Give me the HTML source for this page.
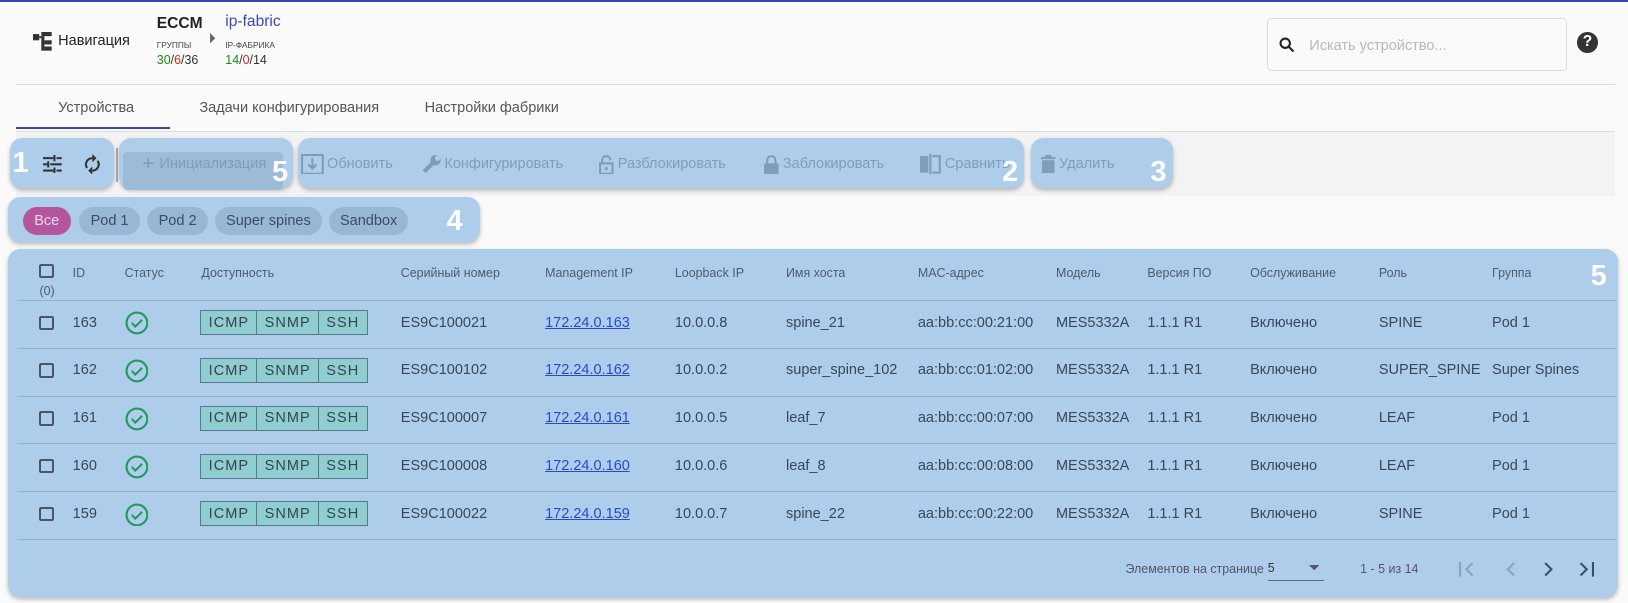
<!DOCTYPE html><html><head><meta charset="utf-8"><style>
*{margin:0;padding:0;box-sizing:border-box}
html,body{width:1628px;height:603px;overflow:hidden}
body{background:#fafafa;font-family:"Liberation Sans",sans-serif;color:#333}
#w{position:relative;width:1568px;height:581px;zoom:1.0383}
.a{position:absolute;white-space:nowrap}
.box{position:absolute;background:#aecdeb;border-radius:12px;box-shadow:0 2px 4px rgba(0,0,0,.25)}
.num{position:absolute;color:#fff;font-weight:bold;font-size:28px}
.btn{position:absolute;font-size:14px;color:#7f9dbb;display:flex;align-items:center;gap:3px}
.chip{position:absolute;top:199px;height:27px;border-radius:14px;background:#98b7d4;color:#3d4d62;font-size:14px;line-height:27px;text-align:center}
.th{position:absolute;top:256px;font-size:12px;color:#4d5c6f}
.row{position:absolute;left:16px;width:1540px;height:1px;background:#8fb2d6}
.c{position:absolute;font-size:14px;color:#38485a}
.cb{position:absolute;width:14px;height:14px;border:2px solid #4a5566;border-radius:2px}
.acc{position:absolute;display:flex;border:1px solid #5a7a8a;background:#8fcdd0;height:24px;font-size:14px;color:#35454f;letter-spacing:1px}
.acc span{padding:0 7px;display:flex;align-items:center;border-right:1px solid #5a7a8a}
.acc span:last-child{border:0}
a{color:#2a4bc8;text-decoration:underline}
</style></head><body><div id="w">
<div class="a" style="left:0;top:0;width:1568px;height:2px;background:#3949ab"></div>
<svg class="a" style="left:32px;top:31px" width="20" height="18" viewBox="0 0 20 18"><rect x="0" y="2" width="6" height="6" fill="#333"/><rect x="8" y="0" width="10" height="4" fill="#333"/><rect x="8" y="4" width="3" height="14" fill="#333"/><rect x="11" y="8" width="7" height="4" fill="#333"/><rect x="11" y="14" width="7" height="4" fill="#333"/><rect x="6" y="4" width="2" height="2" fill="#333"/></svg>
<div class="a" style="left:56px;top:32px;font-size:14px;color:#222">Навигация</div>
<div class="a" style="left:151px;top:14px;font-size:15px;font-weight:bold;color:#222">ECCM</div>
<div class="a" style="left:151px;top:39px;font-size:8px;color:#444">ГРУППЫ</div>
<div class="a" style="left:151px;top:51px;font-size:12px"><span style="color:#1a8a1a">30</span>/<span style="color:#e02020">6</span>/<span>36</span></div>
<svg class="a" style="left:201px;top:32px" width="8" height="10"><path d="M1 0L6 5L1 10Z" fill="#666"/></svg>
<div class="a" style="left:217px;top:13px;font-size:15px;color:#3a4aba">ip-fabric</div>
<div class="a" style="left:217px;top:39px;font-size:8px;color:#444">IP-ФАБРИКА</div>
<div class="a" style="left:217px;top:51px;font-size:12px"><span style="color:#1a8a1a">14</span>/<span style="color:#e02020">0</span>/<span>14</span></div>
<div class="a" style="left:1220px;top:17px;width:289px;height:51px;border:1px solid #ddd;border-radius:4px"></div>
<svg class="a" style="left:1232px;top:36px" width="16" height="16" viewBox="0 0 16 16"><circle cx="6" cy="6" r="4.5" fill="none" stroke="#222" stroke-width="2"/><path d="M9.5 9.5L14 14" stroke="#222" stroke-width="2"/></svg>
<div class="a" style="left:1261px;top:37px;font-size:14px;color:#b8b8b8">Искать устройство...</div>
<div class="a" style="left:1519px;top:31px;width:20px;height:20px;border-radius:50%;background:#333;color:#fff;font-size:15px;font-weight:bold;text-align:center;line-height:20px">?</div>
<div class="a" style="left:15px;top:81px;width:1540px;height:1px;background:#ddd"></div>
<div class="a" style="left:56px;top:96px;font-size:14px;color:#555">Устройства</div>
<div class="a" style="left:192px;top:96px;font-size:14px;color:#555">Задачи конфигурирования</div>
<div class="a" style="left:409px;top:96px;font-size:14px;color:#555">Настройки фабрики</div>
<div class="a" style="left:15px;top:122px;width:149px;height:2px;background:#3949ab"></div>
<div class="a" style="left:15px;top:126px;width:1540px;height:1px;background:#ddd"></div>
<div class="a" style="left:15px;top:127px;width:1540px;height:62px;background:#f3f3f3"></div>

<div class="box" style="left:10px;top:133px;width:100px;height:48px"></div>
<div class="num" style="left:12px;top:142px">1</div>
<svg class="a" style="left:40px;top:149px" width="20" height="18" viewBox="0 0 20 18"><path d="M1 3h10M14 3h5M1 9h4M8 9h11M1 15h10M14 15h5" stroke="#333" stroke-width="2"/><path d="M12 0v6M6 6v6M12 12v6" stroke="#333" stroke-width="2"/></svg>
<svg class="a" style="left:80px;top:148px" width="18" height="20" viewBox="0 0 18 20"><path d="M9 4a6 6 0 0 0-5 9.5M9 16a6 6 0 0 0 5-9.5" fill="none" stroke="#333" stroke-width="2"/><path d="M9 0v8l4-4zM9 20v-8l-4 4z" fill="#333"/></svg>
<div class="a" style="left:112px;top:143px;width:2px;height:32px;background:#aaa"></div>
<div class="box" style="left:115px;top:133px;width:167px;height:48px"></div>
<div class="a" style="left:118px;top:146px;width:155px;height:37px;background:#9bbbd9;border-radius:4px"></div>
<div class="btn" style="left:137px;top:148px;height:20px;font-size:14px"><span style="font-size:20px;margin-right:2px">+</span>Инициализация</div>
<div class="num" style="left:262px;top:150px">5</div>
<div class="box" style="left:287px;top:133px;width:699px;height:48px"></div>
<div class="btn" style="left:290px;top:148px;height:20px"><svg width="22" height="20"><rect x="1" y="1" width="20" height="18" fill="none" stroke="#7f9dbb" stroke-width="2"/><path d="M11 4v10M7 10l4 4 4-4" stroke="#7f9dbb" stroke-width="2" fill="none"/></svg>Обновить</div>
<div class="btn" style="left:405px;top:148px;height:20px"><svg width="20" height="20"><path d="M3 17L11 9" stroke="#7f9dbb" stroke-width="4"/><circle cx="14" cy="6" r="5" fill="#7f9dbb"/><circle cx="16" cy="4" r="2.5" fill="#aecdeb"/></svg>Конфигурировать</div>
<div class="btn" style="left:576px;top:148px;height:20px"><svg width="16" height="20"><path d="M4 9V6a4 4 0 0 1 8 0" fill="none" stroke="#7f9dbb" stroke-width="2"/><rect x="2" y="9" width="12" height="10" fill="none" stroke="#7f9dbb" stroke-width="2"/><circle cx="8" cy="14" r="1.5" fill="#7f9dbb"/></svg>Разблокировать</div>
<div class="btn" style="left:735px;top:148px;height:20px"><svg width="16" height="20"><path d="M4 9V6a4 4 0 0 1 8 0v3" fill="none" stroke="#7f9dbb" stroke-width="2"/><rect x="1" y="9" width="14" height="11" rx="1" fill="#7f9dbb"/></svg>Заблокировать</div>
<div class="btn" style="left:885px;top:148px;height:20px"><svg width="22" height="20"><rect x="1" y="2" width="8" height="16" fill="#7f9dbb"/><path d="M11 0v20M13 2h7v16h-7" stroke="#7f9dbb" stroke-width="2" fill="none"/></svg>Сравнить</div>
<div class="num" style="left:965px;top:150px">2</div>
<div class="box" style="left:993px;top:133px;width:137px;height:48px"></div>
<div class="btn" style="left:1003px;top:148px;height:20px"><svg width="14" height="18"><rect x="0" y="2" width="14" height="2" fill="#7f9dbb"/><rect x="4" y="0" width="6" height="2" fill="#7f9dbb"/><rect x="1" y="5" width="12" height="13" rx="1" fill="#7f9dbb"/></svg> Удалить</div>
<div class="num" style="left:1108px;top:150px">3</div>

<div class="box" style="left:8px;top:190px;width:454px;height:43px"></div>
<div class="chip" style="left:22px;width:46px;background:#b5559e;color:#e8d8ea">Все</div>
<div class="chip" style="left:76px;width:59px">Pod 1</div>
<div class="chip" style="left:142px;width:58px">Pod 2</div>
<div class="chip" style="left:207px;width:103px">Super spines</div>
<div class="chip" style="left:317px;width:76px">Sandbox</div>
<div class="num" style="left:430px;top:197px">4</div>

<div class="box" style="left:8px;top:240px;width:1550px;height:335px"></div>
<div class="num" style="left:1532px;top:250px">5</div>
<div class="cb" style="left:38px;top:254px"></div>
<div class="th" style="left:38px;top:274px">(0)</div>
<div class="th" style="left:70px">ID</div><div class="th" style="left:120px">Статус</div><div class="th" style="left:194px">Доступность</div><div class="th" style="left:386px">Серийный номер</div><div class="th" style="left:525px">Management IP</div><div class="th" style="left:650px">Loopback IP</div><div class="th" style="left:757px">Имя хоста</div><div class="th" style="left:884px">MAC-адрес</div><div class="th" style="left:1017px">Модель</div><div class="th" style="left:1105px">Версия ПО</div><div class="th" style="left:1204px">Обслуживание</div><div class="th" style="left:1328px">Роль</div><div class="th" style="left:1437px">Группа</div>
<div class="row" style="top:289px"></div><div class="row" style="top:335px"></div><div class="row" style="top:381px"></div><div class="row" style="top:427px"></div><div class="row" style="top:473px"></div><div class="row" style="top:519px"></div>

<div class="cb" style="left:38px;top:304px"></div><div class="c" style="left:70px;top:303px">163</div>
<svg class="a" style="left:120px;top:300px" width="23" height="23"><circle cx="11.5" cy="11.5" r="10" fill="none" stroke="#1e9a5a" stroke-width="2"/><path d="M6.5 11.5l3.5 3.5 6.5-6.5" fill="none" stroke="#1e9a5a" stroke-width="2"/></svg>
<div class="acc" style="left:193px;top:299px"><span>ICMP</span><span>SNMP</span><span>SSH</span></div>
<div class="c" style="left:386px;top:303px">ES9C100021</div><div class="c" style="left:525px;top:303px"><a>172.24.0.163</a></div><div class="c" style="left:650px;top:303px">10.0.0.8</div><div class="c" style="left:757px;top:303px">spine_21</div><div class="c" style="left:884px;top:303px">aa:bb:cc:00:21:00</div><div class="c" style="left:1017px;top:303px">MES5332A</div><div class="c" style="left:1105px;top:303px">1.1.1 R1</div><div class="c" style="left:1204px;top:303px">Включено</div><div class="c" style="left:1328px;top:303px">SPINE</div><div class="c" style="left:1437px;top:303px">Pod 1</div>

<div class="cb" style="left:38px;top:350px"></div><div class="c" style="left:70px;top:349px">162</div>
<svg class="a" style="left:120px;top:346px" width="23" height="23"><circle cx="11.5" cy="11.5" r="10" fill="none" stroke="#1e9a5a" stroke-width="2"/><path d="M6.5 11.5l3.5 3.5 6.5-6.5" fill="none" stroke="#1e9a5a" stroke-width="2"/></svg>
<div class="acc" style="left:193px;top:345px"><span>ICMP</span><span>SNMP</span><span>SSH</span></div>
<div class="c" style="left:386px;top:349px">ES9C100102</div><div class="c" style="left:525px;top:349px"><a>172.24.0.162</a></div><div class="c" style="left:650px;top:349px">10.0.0.2</div><div class="c" style="left:757px;top:349px">super_spine_102</div><div class="c" style="left:884px;top:349px">aa:bb:cc:01:02:00</div><div class="c" style="left:1017px;top:349px">MES5332A</div><div class="c" style="left:1105px;top:349px">1.1.1 R1</div><div class="c" style="left:1204px;top:349px">Включено</div><div class="c" style="left:1328px;top:349px">SUPER_SPINE</div><div class="c" style="left:1437px;top:349px">Super Spines</div>

<div class="cb" style="left:38px;top:396px"></div><div class="c" style="left:70px;top:395px">161</div>
<svg class="a" style="left:120px;top:392px" width="23" height="23"><circle cx="11.5" cy="11.5" r="10" fill="none" stroke="#1e9a5a" stroke-width="2"/><path d="M6.5 11.5l3.5 3.5 6.5-6.5" fill="none" stroke="#1e9a5a" stroke-width="2"/></svg>
<div class="acc" style="left:193px;top:391px"><span>ICMP</span><span>SNMP</span><span>SSH</span></div>
<div class="c" style="left:386px;top:395px">ES9C100007</div><div class="c" style="left:525px;top:395px"><a>172.24.0.161</a></div><div class="c" style="left:650px;top:395px">10.0.0.5</div><div class="c" style="left:757px;top:395px">leaf_7</div><div class="c" style="left:884px;top:395px">aa:bb:cc:00:07:00</div><div class="c" style="left:1017px;top:395px">MES5332A</div><div class="c" style="left:1105px;top:395px">1.1.1 R1</div><div class="c" style="left:1204px;top:395px">Включено</div><div class="c" style="left:1328px;top:395px">LEAF</div><div class="c" style="left:1437px;top:395px">Pod 1</div>

<div class="cb" style="left:38px;top:442px"></div><div class="c" style="left:70px;top:441px">160</div>
<svg class="a" style="left:120px;top:438px" width="23" height="23"><circle cx="11.5" cy="11.5" r="10" fill="none" stroke="#1e9a5a" stroke-width="2"/><path d="M6.5 11.5l3.5 3.5 6.5-6.5" fill="none" stroke="#1e9a5a" stroke-width="2"/></svg>
<div class="acc" style="left:193px;top:437px"><span>ICMP</span><span>SNMP</span><span>SSH</span></div>
<div class="c" style="left:386px;top:441px">ES9C100008</div><div class="c" style="left:525px;top:441px"><a>172.24.0.160</a></div><div class="c" style="left:650px;top:441px">10.0.0.6</div><div class="c" style="left:757px;top:441px">leaf_8</div><div class="c" style="left:884px;top:441px">aa:bb:cc:00:08:00</div><div class="c" style="left:1017px;top:441px">MES5332A</div><div class="c" style="left:1105px;top:441px">1.1.1 R1</div><div class="c" style="left:1204px;top:441px">Включено</div><div class="c" style="left:1328px;top:441px">LEAF</div><div class="c" style="left:1437px;top:441px">Pod 1</div>

<div class="cb" style="left:38px;top:488px"></div><div class="c" style="left:70px;top:487px">159</div>
<svg class="a" style="left:120px;top:484px" width="23" height="23"><circle cx="11.5" cy="11.5" r="10" fill="none" stroke="#1e9a5a" stroke-width="2"/><path d="M6.5 11.5l3.5 3.5 6.5-6.5" fill="none" stroke="#1e9a5a" stroke-width="2"/></svg>
<div class="acc" style="left:193px;top:483px"><span>ICMP</span><span>SNMP</span><span>SSH</span></div>
<div class="c" style="left:386px;top:487px">ES9C100022</div><div class="c" style="left:525px;top:487px"><a>172.24.0.159</a></div><div class="c" style="left:650px;top:487px">10.0.0.7</div><div class="c" style="left:757px;top:487px">spine_22</div><div class="c" style="left:884px;top:487px">aa:bb:cc:00:22:00</div><div class="c" style="left:1017px;top:487px">MES5332A</div><div class="c" style="left:1105px;top:487px">1.1.1 R1</div><div class="c" style="left:1204px;top:487px">Включено</div><div class="c" style="left:1328px;top:487px">SPINE</div><div class="c" style="left:1437px;top:487px">Pod 1</div>

<div class="a" style="left:1084px;top:541px;font-size:12px;color:#556">Элементов на странице</div>
<div class="a" style="left:1221px;top:540px;font-size:12px;color:#333">5</div>
<div class="a" style="left:1221px;top:559px;width:54px;height:1px;background:#667"></div>
<svg class="a" style="left:1261px;top:544px" width="10" height="6"><path d="M0 0h10L5 5z" fill="#556"/></svg>
<div class="a" style="left:1310px;top:541px;font-size:12px;color:#556">1 - 5 из 14</div>
<svg class="a" style="left:1404px;top:540px" width="140" height="16"><path d="M2 1v14M14 2L8 8l6 6" stroke="#8aa2ba" stroke-width="2" fill="none"/><path d="M54 2L48 8l6 6" stroke="#8aa2ba" stroke-width="2" fill="none"/><path d="M84 2l6 6-6 6" stroke="#3d4d62" stroke-width="2" fill="none"/><path d="M118 2l6 6-6 6M130 1v14" stroke="#3d4d62" stroke-width="2" fill="none"/></svg>
</div></body></html>
